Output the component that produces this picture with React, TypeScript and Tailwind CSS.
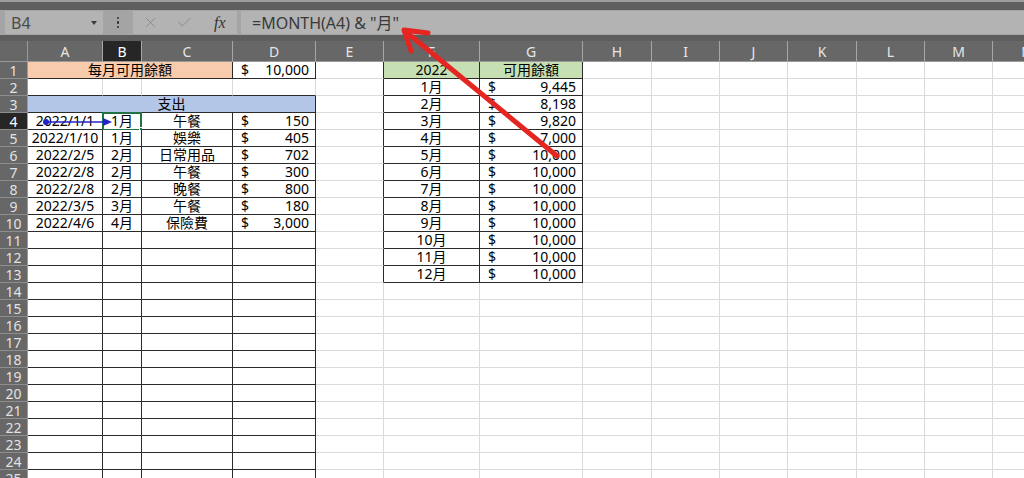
import { X, Check } from 'lucide-react'
import clsx from 'clsx'

const LETTERS = ['A', 'B', 'C', 'D', 'E', 'F', 'G', 'H', 'I', 'J', 'K', 'L', 'M', 'N']

const expenses = [
  ['2022/1/1', '1月', '午餐', '150'],
  ['2022/1/10', '1月', '娛樂', '405'],
  ['2022/2/5', '2月', '日常用品', '702'],
  ['2022/2/8', '2月', '午餐', '300'],
  ['2022/2/8', '2月', '晚餐', '800'],
  ['2022/3/5', '3月', '午餐', '180'],
  ['2022/4/6', '4月', '保險費', '3,000'],
]

const balances = ['9,445', '8,198', '9,820', '7,000', '10,000', '10,000', '10,000', '10,000', '10,000', '10,000', '10,000', '10,000']

// cells that carry the black table borders
const inBox = (r: number, c: number) =>
  (c >= 1 && c <= 4 && (r === 1 || r >= 3)) || (c >= 6 && c <= 7 && r >= 1 && r <= 13)

type CellProps = {
  r: number
  c: number
  span?: number
  bg?: string
  center?: boolean
  children?: React.ReactNode
}

function Cell({ r, c, span = 1, bg, center, children }: CellProps) {
  const last = c + span - 1
  const right = inBox(r, last) || inBox(r, last + 1) ? 'border-r-[#2a2a2a]' : 'border-r-[#dadada]'
  const bottom = inBox(r, c) || inBox(r + 1, c) ? 'border-b-[#2a2a2a]' : 'border-b-[#dadada]'
  return (
    <div
      className={clsx(
        'relative flex h-[17px] items-center overflow-visible whitespace-nowrap border-r border-b text-[14px] leading-[16px] text-black',
        right,
        bottom,
        span === 3 && 'col-span-3',
        span === 4 && 'col-span-4',
        center && 'justify-center',
        bg ?? 'bg-white'
      )}
    >
      {children}
    </div>
  )
}

function Money({ v }: { v: string }) {
  return (
    <>
      <span className="pl-[8px]">$</span>
      <span className="ml-auto pr-[6px]">{v}</span>
    </>
  )
}

function RowHead({ r }: { r: number }) {
  return (
    <div
      className={clsx(
        'flex h-[17px] items-center justify-center border-r border-b border-r-[#9a9a9a] border-b-[#8e8e8e] text-[14px] leading-[15px]',
        r === 4 ? 'bg-[#262626] text-white' : 'bg-[#676767] text-[#e2e2e2]'
      )}
    >
      {r}
    </div>
  )
}

function SheetRow({ r }: { r: number }) {
  const cells: React.ReactNode[] = [<RowHead key="h" r={r} />]

  if (r === 1) {
    cells.push(
      <Cell key="a" r={r} c={1} span={3} bg="bg-[#f8cbad]" center>
        每月可用餘額
      </Cell>,
      <Cell key="d" r={r} c={4}>
        <Money v="10,000" />
      </Cell>
    )
  } else if (r === 3) {
    cells.push(
      <Cell key="a" r={r} c={1} span={4} bg="bg-[#b4c6e7]" center>
        支出
      </Cell>
    )
  } else {
    const e = r >= 4 && r <= 10 ? expenses[r - 4] : null
    cells.push(
      <Cell key="a" r={r} c={1} center>
        {e?.[0]}
      </Cell>,
      <Cell key="b" r={r} c={2} center>
        {e?.[1]}
        {r === 4 && (
          <>
            <div className="absolute -top-px -left-px h-[19px] w-[40px] border-2 border-[#217346]" />
            <div className="absolute -right-[3px] -bottom-[3px] h-[5px] w-[5px] border border-white bg-[#217346]" />
          </>
        )}
      </Cell>,
      <Cell key="c" r={r} c={3} center>
        {e?.[2]}
      </Cell>,
      <Cell key="d" r={r} c={4}>
        {e && <Money v={e[3]} />}
      </Cell>
    )
  }

  cells.push(<Cell key="e" r={r} c={5} />)

  if (r === 1) {
    cells.push(
      <Cell key="f" r={r} c={6} bg="bg-[#c6e0b4]" center>
        2022
      </Cell>,
      <Cell key="g" r={r} c={7} bg="bg-[#c6e0b4]" center>
        可用餘額
      </Cell>
    )
  } else if (r <= 13) {
    cells.push(
      <Cell key="f" r={r} c={6} center>
        {r - 1}月
      </Cell>,
      <Cell key="g" r={r} c={7}>
        <Money v={balances[r - 2]} />
      </Cell>
    )
  } else {
    cells.push(<Cell key="f" r={r} c={6} />, <Cell key="g" r={r} c={7} />)
  }

  for (let c = 8; c <= 14; c++) cells.push(<Cell key={c} r={r} c={c} />)
  return <>{cells}</>
}

export default function App() {
  const rows = Array.from({ length: 25 }, (_, i) => i + 1)

  return (
    <div className="relative h-[478px] w-[1024px] overflow-hidden bg-white font-['Noto_Sans','Noto_Sans_CJK_TC',sans-serif]">
      {/* title strip */}
      <div className="h-[2px] bg-[#9c9c9c]" />
      <div className="h-[8px] bg-[#5e5e5e]" />

      {/* formula bar */}
      <div className="flex h-[25px] items-center bg-[#a4a4a4] pl-[5px]">
        <div className="flex h-[23px] w-[98px] items-center bg-[#b3b3b3] pl-[6px] text-[16px] text-[#4a4a4a]">
          B4
          <span className="ml-auto mr-[6px] h-0 w-0 border-x-[3px] border-t-[4px] border-x-transparent border-t-[#3c3c3c]" />
        </div>
        <div className="flex w-[30px] flex-col items-center gap-[2px]">
          <span className="h-[2.5px] w-[2.5px] rounded-full bg-[#2e2e2e]" />
          <span className="h-[2.5px] w-[2.5px] rounded-full bg-[#2e2e2e]" />
          <span className="h-[2.5px] w-[2.5px] rounded-full bg-[#2e2e2e]" />
        </div>
        <div className="flex h-[23px] w-[104px] items-center bg-[#b3b3b3]">
          <X size={17} strokeWidth={1.3} className="ml-[9px] text-[#8a8a8a]" />
          <Check size={17} strokeWidth={1.3} className="ml-[17px] text-[#8a8a8a]" />
          <span className="ml-[21px] font-['Liberation_Serif',serif] text-[16px] italic text-[#333]">
            fx
          </span>
        </div>
        <div className="ml-[4px] flex h-[23px] flex-1 items-center bg-[#b3b3b3] pl-[11px] text-[16px] text-[#3a3a3a]">
          =MONTH(A4) &amp; "月"
        </div>
      </div>
      <div className="h-[6px] bg-[#5e5e5e]" />

      {/* sheet grid */}
      <div className="grid grid-cols-[28px_75px_39px_91px_83px_68px_96px_103px_69px_68px_68px_69px_68px_68px_68px]">
        <div className="h-[21px] border-r border-b border-r-[#9a9a9a] border-b-[#9a9a9a] bg-[#676767]" />
        {LETTERS.map((l) => (
          <div
            key={l}
            className={clsx(
              'flex h-[21px] items-center justify-center border-r border-b border-r-[#a6a6a6] border-b-[#9a9a9a] text-[14px]',
              l === 'B' ? 'bg-[#262626] text-white' : 'bg-[#676767] text-[#e6e6e6]'
            )}
          >
            {l}
          </div>
        ))}
        {rows.map((r) => (
          <SheetRow key={r} r={r} />
        ))}
      </div>

      {/* trace precedents arrow + annotation arrow */}
      <svg className="pointer-events-none absolute inset-0" width="1024" height="478">
        <line x1="46" y1="122" x2="105" y2="122" stroke="#2222cc" strokeWidth="1.5" />
        <circle cx="46" cy="122" r="3" fill="#2222cc" />
        <polygon points="103,118 112,122 103,126" fill="#2222cc" />
        <g stroke="#e52521" strokeWidth="5" strokeLinecap="round" strokeLinejoin="round" fill="none">
          <line x1="557" y1="156" x2="405" y2="31" />
          <polyline points="428,33 404,30 411,51" />
        </g>
      </svg>
    </div>
  )
}
